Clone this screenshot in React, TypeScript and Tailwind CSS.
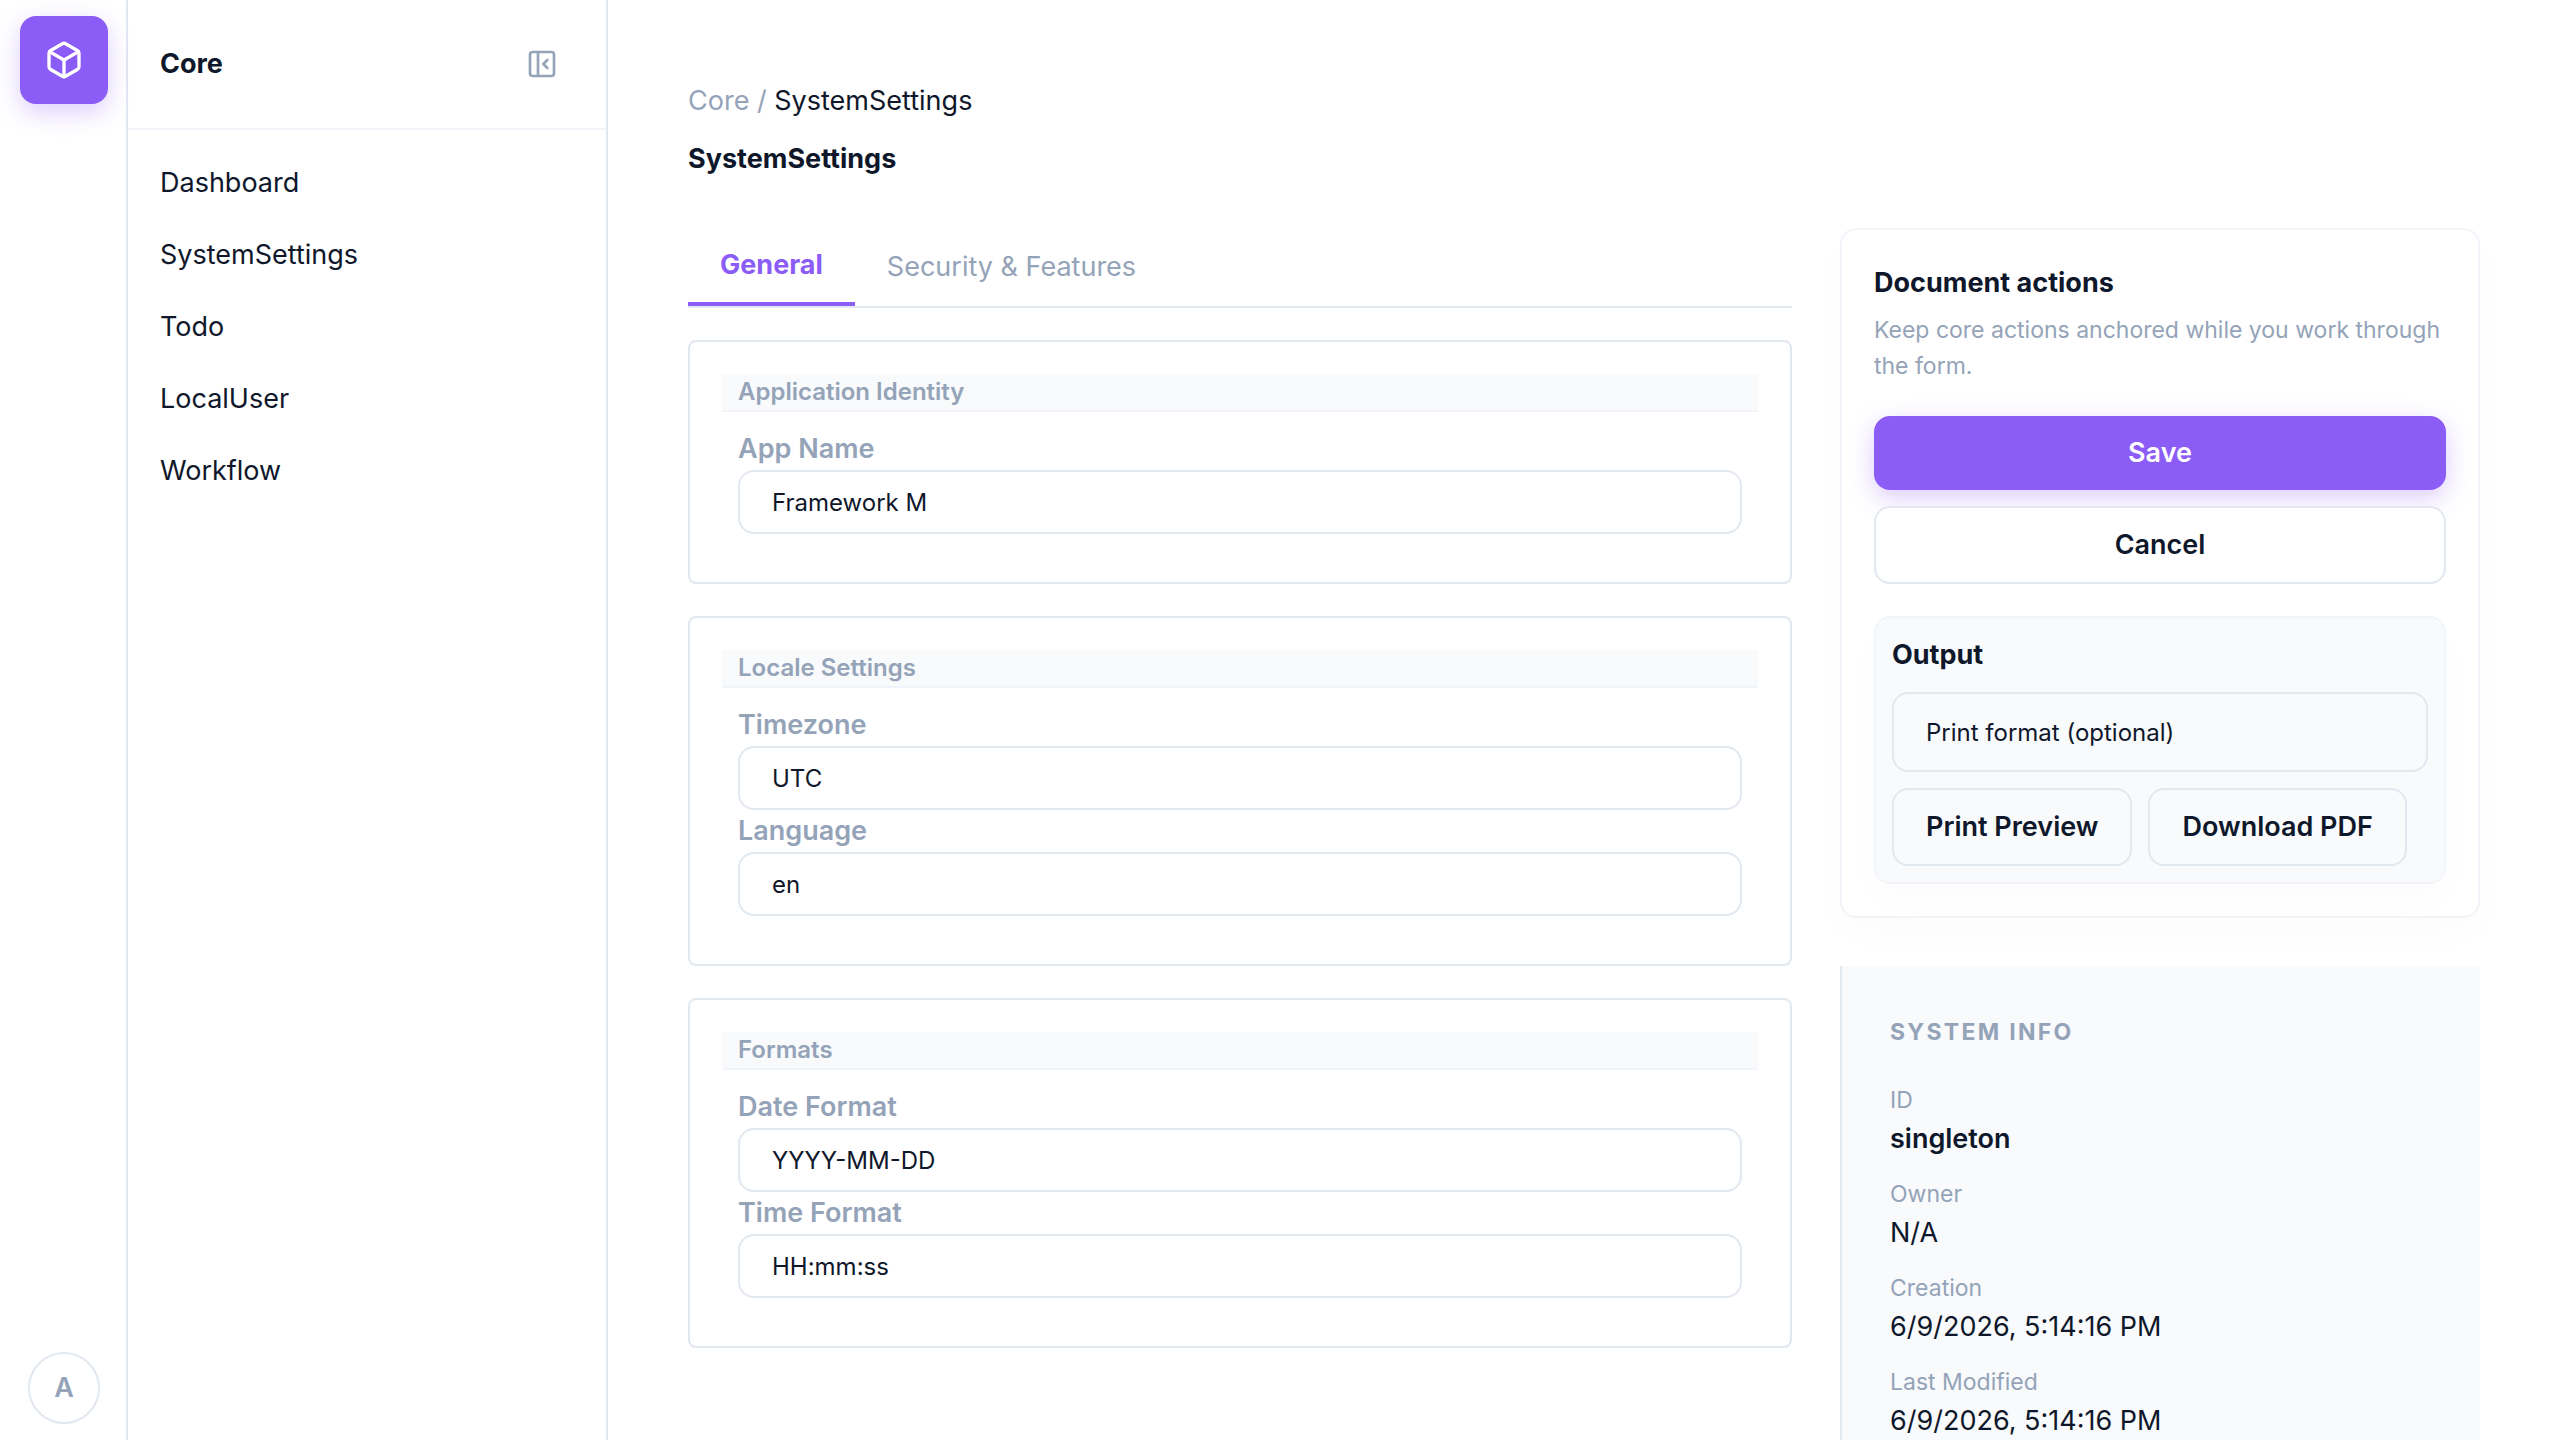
import { useState } from "react";
import { Box, PanelLeftClose } from "lucide-react";

const NAV_LINKS = ["Dashboard", "SystemSettings", "Todo", "LocalUser", "Workflow"];

const TABS = ["General", "Security & Features"];

const SECTIONS = [
  {
    title: "Application Identity",
    fields: [{ name: "app_name", label: "App Name", value: "Framework M" }],
  },
  {
    title: "Locale Settings",
    fields: [
      { name: "timezone", label: "Timezone", value: "UTC" },
      { name: "language", label: "Language", value: "en" },
    ],
  },
  {
    title: "Formats",
    fields: [
      { name: "date_format", label: "Date Format", value: "YYYY-MM-DD" },
      { name: "time_format", label: "Time Format", value: "HH:mm:ss" },
    ],
  },
];

const SYSTEM_INFO = [
  { label: "ID", value: "singleton", strong: true },
  { label: "Owner", value: "N/A" },
  { label: "Creation", value: "6/9/2026, 5:14:16 PM" },
  { label: "Last Modified", value: "6/9/2026, 5:14:16 PM" },
];

function Rail() {
  return (
    <div className="flex w-32 shrink-0 flex-col items-center justify-between border-r-2 border-slate-200 py-4 pl-0.5">
      <button
        type="button"
        aria-label="Core"
        className="flex size-22 items-center justify-center rounded-2xl bg-[#8b5cf6] text-white shadow-[0_8px_24px_rgba(139,92,246,0.3)]"
      >
        <Box size={40} />
      </button>
      <button
        type="button"
        className="flex size-18 items-center justify-center rounded-full border-2 border-slate-200 font-semibold text-[#94a3b8]"
      >
        A
      </button>
    </div>
  );
}

function Sidebar() {
  return (
    <aside className="w-[480px] shrink-0 border-r-2 border-slate-200">
      <div className="flex h-[130px] items-center justify-between border-b-2 border-slate-100 px-8">
        <h2 className="font-bold">Core</h2>
        <button type="button" aria-label="Collapse sidebar" className="p-4 text-[#94a3b8]">
          <PanelLeftClose size={32} />
        </button>
      </div>
      <nav className="flex flex-col py-4">
        {NAV_LINKS.map((item) => (
          <a key={item} href={`#${item}`} className="px-8 pt-4 pb-3.5">
            {item}
          </a>
        ))}
      </nav>
    </aside>
  );
}

function Section({ title, fields }: (typeof SECTIONS)[number]) {
  return (
    <section className="rounded-lg border-2 border-slate-200 p-8">
      <h3 className="border-b-2 border-slate-100 bg-slate-50 px-4 text-2xl leading-9 font-semibold text-[#94a3b8]">
        {title}
      </h3>
      <div className="p-4">
        {fields.map((field) => (
          <div key={field.name}>
            <label htmlFor={field.name} className="block font-semibold text-[#94a3b8]">
              {field.label}
            </label>
            <input
              id={field.name}
              type="text"
              defaultValue={field.value}
              className="block h-16 w-full rounded-2xl border-2 border-slate-200 px-8 text-2xl"
            />
          </div>
        ))}
      </div>
    </section>
  );
}

function DocumentActions() {
  return (
    <section className="rounded-2xl border-2 border-slate-100 p-8 shadow-[0_16px_48px_rgba(15,23,42,0.015)]">
      <h2 className="font-bold">Document actions</h2>
      <p className="mt-2 text-[23px] leading-9 text-[#94a3b8]">
        Keep core actions anchored while you work through the form.
      </p>
      <div className="mt-8 flex flex-col gap-4">
        <button
          type="button"
          className="rounded-2xl bg-[#8b5cf6] py-4 font-semibold text-white shadow-[0_8px_24px_rgba(139,92,246,0.3)]"
        >
          Save
        </button>
        <button type="button" className="rounded-2xl border-2 border-slate-200 bg-white py-4 font-semibold">
          Cancel
        </button>
      </div>
      <div className="mt-8 flex flex-col gap-4 rounded-2xl border-2 border-slate-100 bg-slate-50 p-4 shadow-[0_16px_48px_rgba(15,23,42,0.015)]">
        <h3 className="font-bold">Output</h3>
        <input
          type="text"
          aria-label="Print format"
          placeholder="Print format (optional)"
          className="h-20 w-full rounded-2xl border-2 border-slate-200 px-8 text-2xl placeholder:text-slate-900"
        />
        <div className="flex flex-wrap gap-4">
          <button type="button" className="rounded-2xl border-2 border-slate-200 px-8 py-4 font-semibold">
            Print Preview
          </button>
          <button type="button" className="rounded-2xl border-2 border-slate-200 px-8 py-4 font-semibold">
            Download PDF
          </button>
        </div>
      </div>
    </section>
  );
}

function SystemInfo() {
  return (
    <section className="border-l-2 border-slate-200 bg-slate-50 p-12">
      <h2 className="text-[23px] leading-9 font-bold tracking-widest text-[#94a3b8] uppercase">System Info</h2>
      <dl className="mt-8 flex flex-col gap-4">
        {SYSTEM_INFO.map((item) => (
          <div key={item.label}>
            <dt className="text-[23px] leading-9 text-[#94a3b8]">{item.label}</dt>
            <dd className={item.strong ? "font-semibold" : ""}>{item.value}</dd>
          </div>
        ))}
      </dl>
    </section>
  );
}

export default function App() {
  const [activeTab, setActiveTab] = useState(TABS[0]);

  return (
    <div className="flex h-screen overflow-hidden bg-white font-['Inter',sans-serif] text-[27px] leading-[42px] text-slate-900">
      <Rail />
      <Sidebar />
      <main className="min-w-0 flex-1 overflow-y-auto p-20 [scrollbar-width:none]">
        <div className="text-[#94a3b8]">
          <a href="#core">Core</a> / <span className="text-slate-900">SystemSettings</span>
        </div>
        <h1 className="mt-4 font-bold">SystemSettings</h1>

        <div className="mt-12 flex items-start gap-12">
          <div className="min-w-0 flex-1">
            <div role="tablist" className="flex h-20 border-b-2 border-slate-200">
              {TABS.map((tab) => (
                <button
                  key={tab}
                  type="button"
                  role="tab"
                  aria-selected={tab === activeTab}
                  onClick={() => setActiveTab(tab)}
                  className={
                    tab === activeTab
                      ? "border-b-4 border-[#8b5cf6] px-8 font-bold text-[#8b5cf6]"
                      : "px-8 text-[#94a3b8]"
                  }
                >
                  {tab}
                </button>
              ))}
            </div>
            <form className="mt-8 flex flex-col gap-8">
              {SECTIONS.map((section) => (
                <Section key={section.title} {...section} />
              ))}
            </form>
          </div>

          <div className="flex w-[640px] shrink-0 flex-col gap-12">
            <DocumentActions />
            <SystemInfo />
          </div>
        </div>
      </main>
    </div>
  );
}
